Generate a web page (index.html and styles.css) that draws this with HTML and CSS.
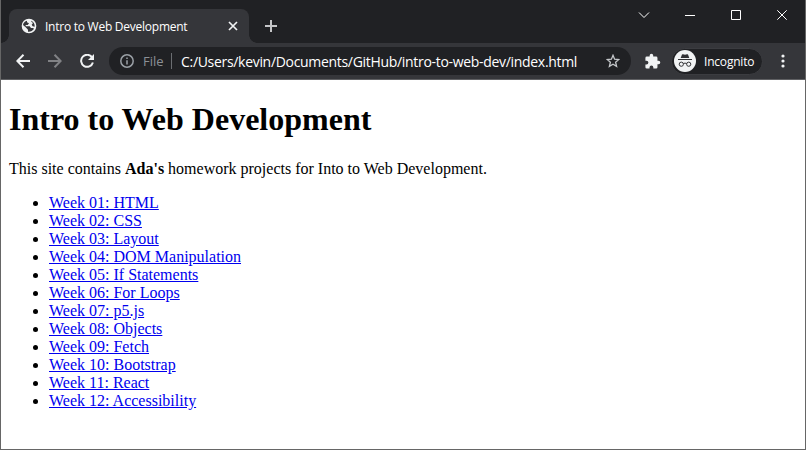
FILE: index.html
```html
<!DOCTYPE html>
<html lang="en">
<head>
<meta charset="utf-8">
<title>Intro to Web Development</title>
<link rel="stylesheet" href="styles.css">
</head>
<body>
<div class="window">
  <header class="tabstrip">
    <div class="tab">
      <svg class="globe" width="16" height="16" viewBox="0 0 24 24"><path d="M12 1a11 11 0 1 0 0 22 11 11 0 0 0 0-22zm-1.500 19.500v-3L7 14l-4-3.500C3.500 7 6 4.500 9 4v2.500l3 1.500-2 2.500H7v2h6l2 2.500h2.500c1 0 1.800.8 1.800 1.500-1.800 2.600-5 4.500-8.800 4zM20.500 13l-3-.5-1.500-2.500 2-2.500-2.500-2V4.200C18.500 5.800 21 9 20.500 13z"/></svg>
      <span class="tab-title">Intro to Web Development</span>
      <svg class="tab-close" width="10" height="10" viewBox="0 0 10 10"><path d="M1 1l8 8M9 1L1 9"/></svg>
    </div>
    <svg class="plus" width="12" height="12" viewBox="0 0 12 12"><path d="M6 0v12M0 6h12"/></svg>
    <div class="controls">
      <svg width="12" height="10" viewBox="0 0 12 10"><path d="M1 2.500l5 5 5-5"/></svg>
      <svg width="10" height="10" viewBox="0 0 10 10"><path d="M0 5.500h10"/></svg>
      <svg width="10" height="10" viewBox="0 0 10 10"><path d="M.5.5h9v9h-9z"/></svg>
      <svg width="10" height="10" viewBox="0 0 10 10"><path d="M.3.300l9.400 9.400M9.700.300L.3 9.700"/></svg>
    </div>
  </header>
  <nav class="toolbar">
    <div class="navigation">
      <svg width="14" height="14" viewBox="0 0 14 14"><path d="M14 7H1.500M7.500.800L1.300 7l6.200 6.200"/></svg>
      <svg class="disabled" width="14" height="14" viewBox="0 0 14 14"><path d="M0 7h12.500M6.500.800L12.700 7l-6.200 6.200"/></svg>
      <svg width="14" height="14" viewBox="0 0 14 14"><path d="M12.200 3.600A6 6 0 1 0 12.900 8.500"/><path class="solid" d="M14 0v6H8z"/></svg>
    </div>
    <div class="address">
      <svg class="info" width="14" height="14" viewBox="0 0 14 14"><circle cx="7" cy="7" r="6.200"/><path d="M7 6.200v4.300M7 3.500v1.500"/></svg>
      <span class="scheme">File</span>
      <span class="divider"></span>
      <span class="url">C:/Users/kevin/Documents/GitHub/intro-to-web-dev/index.html</span>
      <svg class="star" width="14" height="14" viewBox="0 0 14 14"><path d="M7 1.300l1.600 3.900 4.200.3-3.200 2.700 1 4.200L7 10.200l-3.600 2.200 1-4.200L1.200 5.500l4.200-.3z"/></svg>
    </div>
    <svg class="extensions" width="17" height="17" viewBox="0 0 24 24"><path d="M20.500 11H19V7a2 2 0 0 0-2-2h-4V3.500a2.500 2.500 0 0 0-5 0V5H4a2 2 0 0 0-2 2v3.800h1.500a2.700 2.700 0 0 1 0 5.400H2V20a2 2 0 0 0 2 2h3.800v-1.500a2.700 2.700 0 0 1 5.400 0V22H17a2 2 0 0 0 2-2v-4h1.500a2.500 2.500 0 0 0 0-5z"/></svg>
    <div class="profile">
      <svg width="22" height="22" viewBox="0 0 22 22"><circle class="disc" cx="11" cy="11" r="11"/><path class="hat" d="M6.700 8L8 4.600Q8.300 4 9 4.200l2 .5 2-.5q.7-.2 1 .4L15.300 8z"/><path class="lines" d="M4 9.500h14M9.400 13.500q1.600-.8 3.200 0"/><circle class="lines" cx="7.300" cy="14.200" r="2.100"/><circle class="lines" cx="14.700" cy="14.200" r="2.100"/></svg>
      <span>Incognito</span>
    </div>
    <svg class="menu" width="4" height="14" viewBox="0 0 4 14"><circle cx="2" cy="2" r="1.600"/><circle cx="2" cy="7" r="1.600"/><circle cx="2" cy="12" r="1.600"/></svg>
  </nav>
  <main class="page">
    <h1>Intro to Web Development</h1>
    <p>This site contains <b>Ada's</b> homework projects for Into to Web Development.</p>
    <ul>
      <li><a href="#">Week 01: HTML</a></li>
      <li><a href="#">Week 02: CSS</a></li>
      <li><a href="#">Week 03: Layout</a></li>
      <li><a href="#">Week 04: DOM Manipulation</a></li>
      <li><a href="#">Week 05: If Statements</a></li>
      <li><a href="#">Week 06: For Loops</a></li>
      <li><a href="#">Week 07: p5.js</a></li>
      <li><a href="#">Week 08: Objects</a></li>
      <li><a href="#">Week 09: Fetch</a></li>
      <li><a href="#">Week 10: Bootstrap</a></li>
      <li><a href="#">Week 11: React</a></li>
      <li><a href="#">Week 12: Accessibility</a></li>
    </ul>
  </main>
</div>
</body>
</html>
```
FILE: styles.css
```css
* { box-sizing: border-box; }
body { margin: 0; overflow: hidden; }
svg { display: block; flex: none; fill: none; }
.window {
  width: 806px;
  height: 450px;
  display: flex;
  flex-direction: column;
  border: 1px solid #666;
  border-top: 0;
  background: #fff;
}
.tabstrip, .toolbar { font-family: "Open Sans", "Noto Sans", sans-serif; white-space: nowrap; }
.tabstrip {
  height: 43px;
  flex: none;
  display: flex;
  align-items: flex-start;
  padding-left: 8px;
  background: #202124;
}
.tab {
  position: relative;
  width: 240px;
  height: 34px;
  margin-top: 9px;
  padding: 0 11px 0 12px;
  display: flex;
  align-items: center;
  background: #35363a;
  border-radius: 8px 8px 0 0;
}
.tab::before, .tab::after {
  content: "";
  position: absolute;
  bottom: 0;
  width: 8px;
  height: 8px;
}
.tab::before { left: -8px; background: radial-gradient(circle at 0 0, #202124 7.500px, #35363a 8px); }
.tab::after { right: -8px; background: radial-gradient(circle at 100% 0, #202124 7.500px, #35363a 8px); }
.globe { fill: #f1f3f4; }
.tab-title {
  margin-left: 8px;
  font-size: 12px;
  letter-spacing: -0.250px;
  color: #fff;
}
.tab-close { margin-left: auto; stroke: #f1f3f4; stroke-width: 1.700; }
.plus { margin: 20px 0 0 16px; stroke: #c5c6c8; stroke-width: 2; }
.controls {
  display: flex;
  gap: 36px;
  margin: 10px 18px 0 auto;
  stroke: #fff;
  stroke-width: 1;
}
.controls svg:first-child { margin-right: -1px; }
.toolbar {
  height: 37px;
  flex: none;
  display: flex;
  align-items: center;
  background: #35363a;
  border-bottom: 1px solid #5f6063;
}
.navigation {
  display: flex;
  gap: 18px;
  margin-left: 15px;
  stroke: #f1f3f4;
  stroke-width: 2;
}
.navigation .disabled { stroke: #818285; }
.navigation .solid { fill: #f1f3f4; stroke: none; }
.address {
  width: 522px;
  height: 28px;
  margin-left: 15px;
  padding: 0 11px;
  display: flex;
  align-items: center;
  border-radius: 14px;
  background: #202124;
  font-size: 14px;
}
.info { stroke: #9aa0a6; stroke-width: 1.500; }
.scheme { width: 22px; margin-left: 9px; color: #8b9096; font-size: 13px; }
.divider { width: 1px; height: 16px; margin: 0 9px 0 6px; background: #6b6e72; }
.url { color: #fff; letter-spacing: -0.310px; }
.star { margin-left: auto; stroke: #c4c7ca; stroke-width: 1.300; }
.extensions { margin-left: 13px; fill: #f1f3f4; }
.profile {
  width: 92px;
  height: 27px;
  margin-left: 10px;
  padding-left: 2px;
  display: flex;
  align-items: center;
  gap: 8px;
  border-radius: 14px;
  border: 1px solid #3b3c40;
  background: #202124;
  color: #fff;
  font-size: 12px;
  letter-spacing: -0.200px;
}
.profile .disc { fill: #f1f3f4; }
.profile .hat { fill: #303134; }
.profile .lines { stroke: #303134; stroke-width: 1; }
.menu { margin-left: 18px; fill: #f1f3f4; }
.page {
  flex: 1;
  padding: 0 8px;
  font: 16px/18px "Liberation Serif", "Times New Roman", serif;
  color: #000;
}
h1 { margin: 21px 0 22px; font-size: 32px; line-height: 37px; }
p { margin: 0 0 16px; }
ul { margin: 0; padding-left: 40px; }
a { color: #0000ee; }
```
